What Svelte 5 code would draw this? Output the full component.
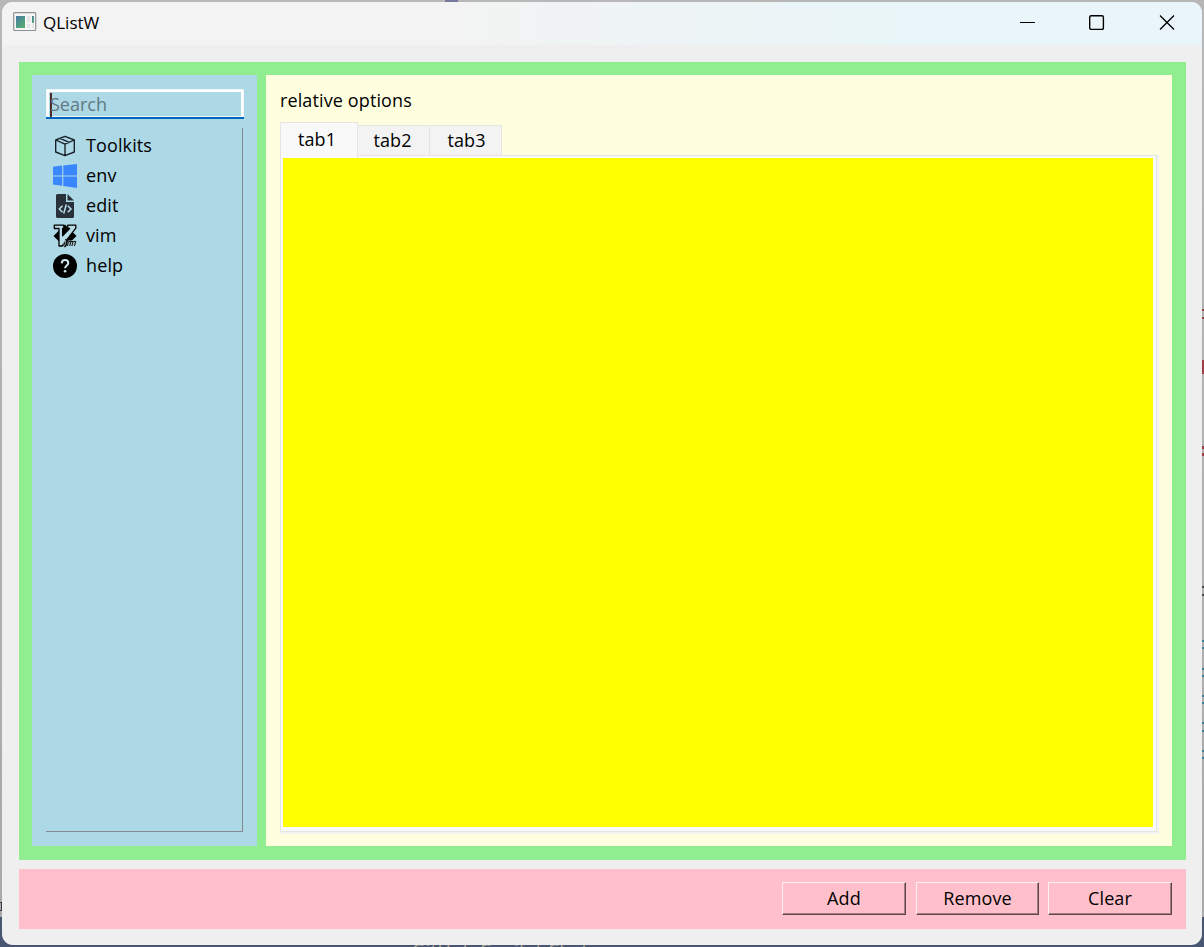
<script>
  const items = ['Toolkits', 'env', 'edit', 'vim', 'help'];
  const tabs = ['tab1', 'tab2', 'tab3'];
  const buttons = ['Add', 'Remove', 'Clear'];
  const marks = [
    [309, 2, '#a33b42'], [317, 2, '#a33b42'], [360, 14, '#a33b42'], [446, 3, '#a33b42'], [453, 3, '#a33b42'],
    [586, 2, '#444'], [594, 2, '#444'], [640, 2, '#387f9d'], [647, 2, '#387f9d'], [668, 2, '#387f9d'], [675, 2, '#387f9d'],
    [695, 2, '#387f9d'], [702, 2, '#387f9d'], [722, 2, '#387f9d'], [730, 2, '#387f9d'], [750, 2, '#387f9d'], [757, 2, '#387f9d']
  ];
  let active = $state(0);
</script>

<div class="desktop">
  {#each marks as [y, h, color]}
    <i class="mark" style:top="{y}px" style:height="{h}px" style:background={color}></i>
  {/each}
  <i class="leftmark"></i>
  <i class="topmark"></i>
  <span class="behind">GitHub Copilot Chat</span>
  <div class="window">
    <header>
      <svg class="appicon" width="24" height="20" viewBox="0 0 24 20">
        <defs><linearGradient id="g" x1="0" y1="0" x2=".7" y2="1"><stop stop-color="#4878a4" /><stop offset="1" stop-color="#55ad72" /></linearGradient></defs>
        <rect x=".7" y=".7" width="22" height="17.8" rx="1" fill="#f6f6f6" stroke="#8e9297" stroke-width="1.2" />
        <rect x="3" y="4" width="9" height="12" fill="url(#g)" />
        <path d="M14 4h3.500v6H14zM14 12h3.500v4H14zM19 12h2v4h-2z" fill="#e4e5e6" />
        <rect x="19" y="4" width="2" height="7" fill="url(#g)" />
      </svg>
      <span class="title">QListW</span>
      <div class="controls">
        <svg width="16" height="16" viewBox="0 0 16 16"><path d="M1 8.500h15" /></svg>
        <svg width="16" height="16" viewBox="0 0 16 16"><rect x=".7" y="1.700" width="13.700" height="13.700" rx="1.500" stroke-width="1.400" /></svg>
        <svg width="16" height="16" viewBox="0 0 16 16"><path d="M1 1.500l14 14M15 1.500l-14 14" stroke-width="1.300" /></svg>
      </div>
    </header>
    <main>
      <aside>
        <div class="search"><span class="caret"></span><span>Search</span></div>
        <ul>
          {#each items as item, i}
            <li>
              <svg width="24" height="24" viewBox="0 0 24 24">
                {#if i === 0}
                  <path d="M12 2.300L21.300 6v12L12 21.700 2.700 18V6zM2.700 6L12 10.200 21.300 6M12 10.200v11.500M7 4.300l9.300 4" fill="none" stroke="#182126" stroke-width="1.350" stroke-linejoin="round" />
                {:else if i === 1}
                  <path d="M0 2.800L9.200 1.600v9.800H0zM10.300 1.500L24 0v11.400H10.300zM0 12.500h9.200v9.300L0 20.500zM10.300 12.500H24V24l-13.700-2z" fill="#3a86ff" />
                {:else if i === 2}
                  <path d="M4.500 0H13v8h8v14.500q0 1.500-1.500 1.500h-15Q3 24 3 22.500v-21Q3 0 4.500 0zM14.500 0L21 6.600h-6.500z" fill="#28303a" />
                  <path d="M9.500 11.800L6.300 15l3.200 3.200M14.800 11.800L18 15l-3.200 3.200M13.300 10.500l-2.600 9" fill="none" stroke="#b8dce8" stroke-width="1.500" />
                {:else if i === 3}
                  <path d="M12 .5L23.500 12 12 23.500.5 12z" fill="#000" />
                  <path d="M1.300 1.200h9.500v3.300H9.600v7.300l7-7.300h-1.800V1.200h8v2.900L9.100 22H6V4.500H1.300z" fill="#b8dce8" stroke="#000" stroke-width="1.300" stroke-linejoin="round" />
                  <path d="M12.300 16.500L11 22M14.500 22l1.300-4.500h2.100L16.700 22M17.900 17.500h2L18.800 22M20.200 17.500h2.300L21.400 22" fill="none" stroke="#a3c2cc" stroke-width="2" />
                  <path d="M12.700 15l-.3.900M12 17.500l-1.300 4.500M14.300 22l1.300-4.500h2.300L16.700 22M17.900 17.500h2.200L18.900 22M20.200 17.500h2.500L21.400 22" fill="none" stroke="#000" stroke-width=".9" />
                {:else}
                  <circle cx="12" cy="12" r="12" fill="#000" />
                  <path d="M8.700 9.400c.1-2.200 1.300-3.300 3.300-3.300s3.300 1.200 3.300 3c0 2.400-3.200 2.500-3.200 5.100" fill="none" stroke="#d2e8f0" stroke-width="2" />
                  <circle cx="12.100" cy="17.300" r="1.300" fill="#d2e8f0" />
                {/if}
              </svg>
              <span>{item}</span>
            </li>
          {/each}
        </ul>
      </aside>
      <section>
        <div class="label">relative options</div>
        <div class="tabs">
          {#each tabs as tab, i}
            <button class="tab" class:active={i === active} onclick={() => (active = i)}>{tab}</button>
          {/each}
        </div>
        <div class="pane"><div class="canvas"></div></div>
      </section>
    </main>
    <footer>
      {#each buttons as b}
        <button class="push" class:wide={b !== 'Remove'}>{b}</button>
      {/each}
    </footer>
  </div>
</div>

<style>
  :global(body) { margin: 0; }
  * { box-sizing: border-box; }
  .desktop {
    position: relative; width: 1204px; height: 947px; padding: 2px; overflow: hidden;
    background: linear-gradient(#b7b7b7 0, #aaa 890px, #aaa 917px, #485672 917px);
    font-family: "Open Sans", "Noto Sans", sans-serif; font-size: 18px; letter-spacing: .12px; color: #000;
  }
  .mark { position: absolute; right: 0; width: 2px; }
  .leftmark { position: absolute; left: 0; top: 902px; width: 2px; height: 9px; border: 1px solid #3a3a44; border-left: 0; }
  .topmark { position: absolute; left: 445px; top: 0; width: 13px; height: 2px; background: #77779b; }
  .behind { position: absolute; left: 412px; top: 939px; line-height: 22px; letter-spacing: .5px; color: #a8a99b; white-space: nowrap; }
  .window { position: relative; width: 1200px; height: 943px; background: #efefef; border-radius: 11px; overflow: hidden; display: flex; flex-direction: column; }
  header { height: 43px; flex: none; display: flex; align-items: flex-start; padding: 10px 27px 0 11px; background: linear-gradient(90deg, #f3f3f3 0, #f3f3f3 36%, #e9f5f8 75%, #e9f5fa); }
  .title { font-size: 17px; line-height: 21px; margin-left: 6px; letter-spacing: 0; }
  .controls { margin-left: auto; display: flex; gap: 54px; padding-top: 2px; }
  .controls svg { fill: none; stroke: #000; stroke-width: 1; }
  main { margin: 17px 16px 0 17px; height: 798px; padding: 13px 14px 14px 13px; background: #90ee90; display: flex; gap: 9px; }
  aside { width: 225px; background: #add8e6; padding: 14px 14px 14px; display: flex; flex-direction: column; }
  .search { width: 198px; height: 30px; border: 0 solid #0067c0; border-bottom-width: 2px; box-shadow: inset 0 0 0 1px #f1f5f7, inset 3px 3px #fff, inset -3px -1px #fff; display: flex; color: #627983; line-height: 25px; padding: 3px 0 0 4px; letter-spacing: 0; }
  .caret { width: 2px; height: 24px; margin: 1px -2px 0 0; background: #4c2c24; }
  ul { list-style: none; margin: 9px 0 0; padding: 2px 0 0 7px; width: 197px; flex: 1; border-right: 1px solid #828790; border-bottom: 1px solid #828790; }
  li { height: 30px; display: flex; align-items: center; gap: 9px; }
  li svg { margin-top: 2px; }
  section { flex: 1; background: #ffffe0; padding: 12px 13px 13px 14px; display: flex; flex-direction: column; }
  .label { height: 35px; line-height: 27px; }
  .tabs { height: 33px; display: flex; align-items: flex-end; position: relative; z-index: 1; }
  .tab { font: inherit; letter-spacing: inherit; color: #000; width: 72px; height: 30px; padding: 0 2px 2px 0; line-height: 26px; border: 1px solid #e5e5e5; border-width: 1px 1px 0 0; border-radius: 1px 1px 0 0; background: #f3f3f3; }
  .tab:last-child { padding: 0 0 2px 2px; }
  .tab.active { width: 78px; height: 36px; margin-bottom: -3px; padding: 0 4px 3px 0; border-left-width: 1px; background: #f9f9f9; line-height: 32px; }
  .pane { flex: 1; margin-bottom: -1px; border-right: 2px solid #f3f3f3; border-bottom: 2px solid #f3f3f3; display: flex; }
  .canvas { flex: 1; background: #ff0; border: solid #f9f9f9; border-width: 2px 3px 4px 2px; outline: 1px solid #e5e5e5; outline-offset: -1px; box-shadow: inset 0 0 0 1px #f9f9f9; }
  footer { height: 60px; margin: 9px 16px 16px 17px; padding: 13px 14px; background: #ffc0cb; display: flex; justify-content: flex-end; gap: 9px; }
  .push { font: inherit; letter-spacing: inherit; color: #000; width: 123px; height: 33px; padding: 0 0 2px; line-height: 28px; background: #ffc0cb; border: 1px solid; border-color: #fff1f3 #5e474b #5e474b #fff1f3; box-shadow: inset -1px -1px #a57c83; }
  .push.wide { width: 124px; }
  .push:first-child { margin-right: 1px; }
</style>
